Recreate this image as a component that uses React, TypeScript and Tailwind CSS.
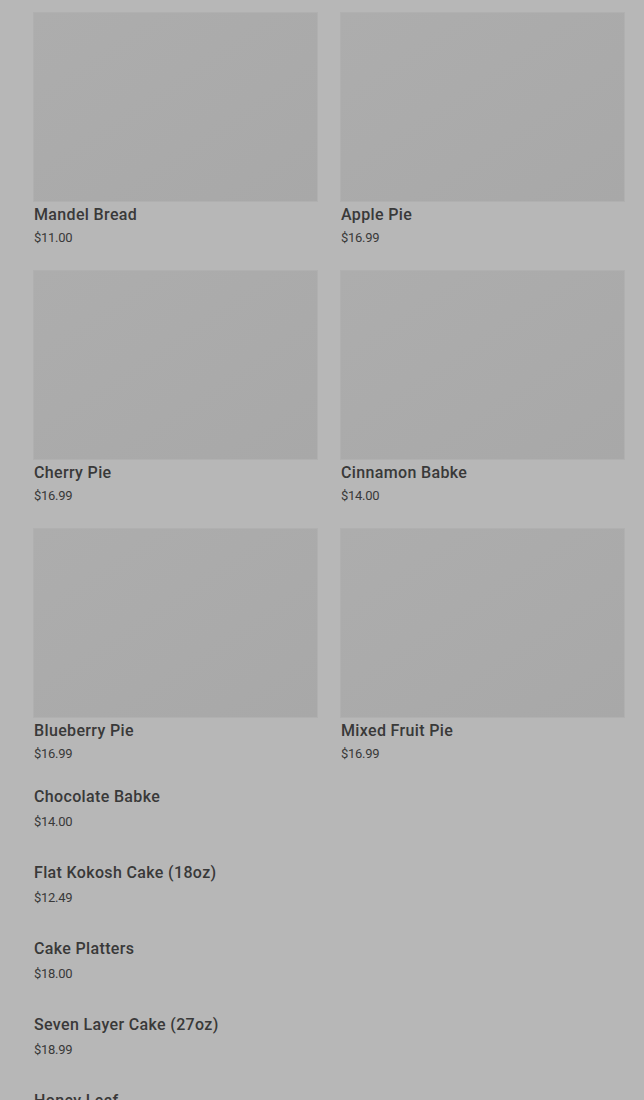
import React from "react";

const cards = [
  { name: "Mandel Bread", price: "$11.00" },
  { name: "Apple Pie", price: "$16.99" },
  { name: "Cherry Pie", price: "$16.99" },
  { name: "Cinnamon Babke", price: "$14.00" },
  { name: "Blueberry Pie", price: "$16.99" },
  { name: "Mixed Fruit Pie", price: "$16.99" },
];

const list = [
  { name: "Chocolate Babke", price: "$14.00" },
  { name: "Flat Kokosh Cake (18oz)", price: "$12.49" },
  { name: "Cake Platters", price: "$18.00" },
  { name: "Seven Layer Cake (27oz)", price: "$18.99" },
  { name: "Honey Leaf", price: "$9.99" },
];

export default function App() {
  return (
    <div
      className="w-[644px] h-[1100px] overflow-hidden bg-[#b7b7b7] text-[#393939]"
      style={{ fontFamily: "Roboto, 'Liberation Sans', sans-serif" }}
    >
      <div className="pl-[34px] pr-[20px] pt-[13px]">
        <div className="grid grid-cols-2 gap-x-[24px] gap-y-[24px]">
          {cards.map((c) => (
            <div key={c.name} className="flex flex-col">
              <div className="h-[188px] bg-gradient-to-br from-[#adadad] to-[#a8a8a8] outline outline-1 outline-[#b0b0b0]" />
              <div className="mt-[4px] text-[16px] leading-[20px] font-medium tracking-[0.35px]">
                {c.name}
              </div>
              <div className="mt-[4px] text-[13px] leading-[18px] tracking-[-0.3px]">
                {c.price}
              </div>
            </div>
          ))}
        </div>
        <div className="mt-[21px] flex flex-col">
          {list.map((c) => (
            <div key={c.name} className="h-[76px] flex flex-col">
              <div className="pt-[1px] text-[16px] leading-[24px] font-medium tracking-[0.35px]">
                {c.name}
              </div>
              <div className="mt-[3px] text-[13px] leading-[20px] tracking-[-0.3px]">
                {c.price}
              </div>
            </div>
          ))}
        </div>
      </div>
    </div>
  );
}
